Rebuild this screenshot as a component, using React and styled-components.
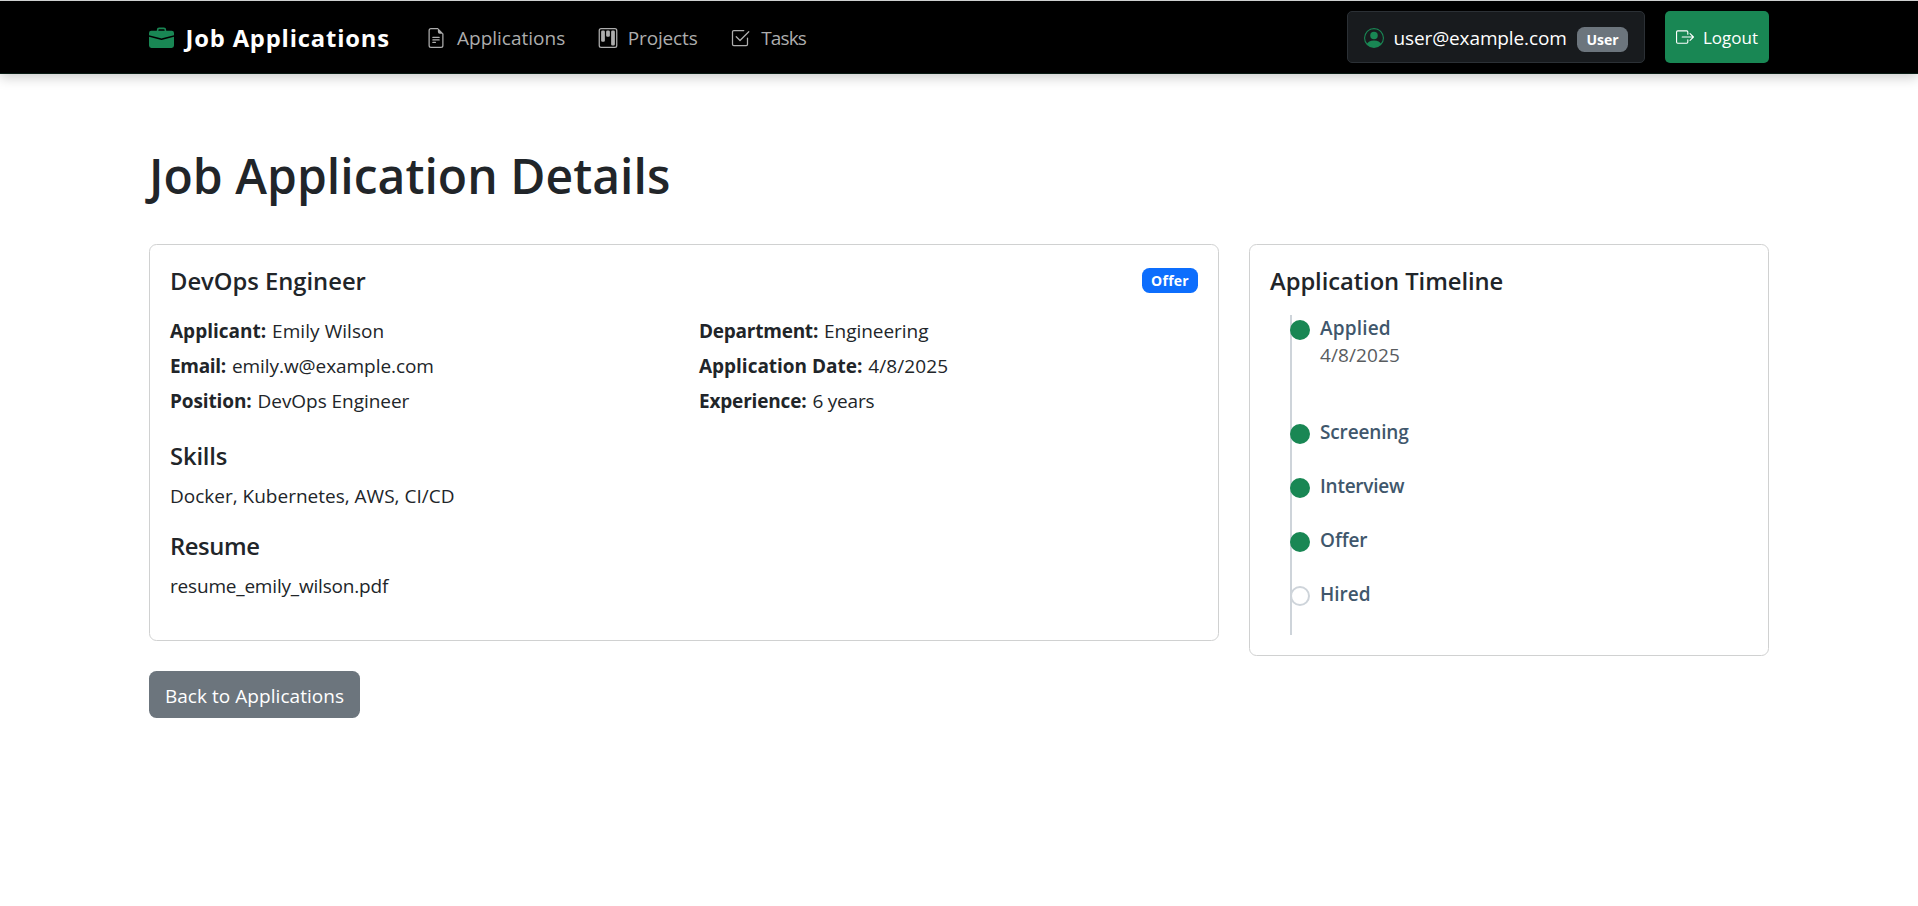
import React from "react";
import styled, { createGlobalStyle } from "styled-components";
import {
  BsBriefcaseFill,
  BsFileEarmarkText,
  BsKanban,
  BsCheck2Square,
  BsPersonCircle,
  BsBoxArrowRight,
} from "react-icons/bs";

const GlobalStyle = createGlobalStyle`
  *, *::before, *::after { box-sizing: border-box; }
  body {
    margin: 0;
    background: #fff;
    color: #212529;
    font-family: "Segoe UI", "Open Sans", "Noto Sans", sans-serif;
    font-size: 19px;
    line-height: 30px;
  }
  h1, h2, p, ul { margin: 0; padding: 0; }
  svg { display: block; flex: none; }
`;

const Text = styled.span`
  letter-spacing: ${(p) => p.$track || 0}px;
  white-space: nowrap;
`;

const Container = styled.div`
  width: 1620px;
  margin: 0 auto;
`;

/* Navigation bar */
const Navbar = styled.header`
  background: #000;
  border-top: 1px solid #ced0d0;
  border-bottom: 1px solid #0a1c15;
  box-shadow: 0 3px 12px rgba(0, 0, 0, 0.22);
`;

const NavInner = styled(Container)`
  display: flex;
  align-items: center;
  height: 72px;
`;

const Brand = styled.a`
  display: flex;
  align-items: center;
  gap: 11.5px;
  width: 276.5px;
  padding-top: 2px;
  color: #fff;
  font-size: 23.75px;
  font-weight: 700;
  svg { color: #198754; }
`;

const NavLinks = styled.nav`
  display: flex;
  gap: 32.5px;
  padding-top: 2px;
`;

const NavLink = styled.a`
  display: flex;
  align-items: center;
  gap: ${(p) => p.$gap}px;
  color: #adadad;
`;

const Account = styled.div`
  display: flex;
  gap: 20px;
  margin-left: auto;
`;

const UserPill = styled.div`
  display: flex;
  align-items: center;
  width: 298px;
  height: 52px;
  padding: 2px 16px 0;
  border: 1px solid #2b3035;
  border-radius: 5px;
  background: #181b1e;
  color: #fff;
  svg { color: #198754; margin-right: 9.5px; }
`;

const Badge = styled.span`
  width: ${(p) => p.$width}px;
  height: 25px;
  margin: 3px 0 0 auto;
  border-radius: 7.5px;
  background: ${(p) => (p.$tone === "primary" ? "#0d6efd" : "#6c757d")};
  color: #fff;
  font-size: 14px;
  font-weight: 700;
  line-height: 25px;
  text-align: center;
`;

const LogoutButton = styled.button`
  display: flex;
  align-items: center;
  gap: 9.5px;
  width: 104px;
  height: 52px;
  padding: 0 0 0 10.5px;
  border: 0;
  border-radius: 5px;
  background: #198754;
  color: #fff;
  font: inherit;
  font-size: 17px;
  ${Text} { padding-top: 1px; }
`;

/* Page content */
const Main = styled(Container)`
  padding-top: 72px;
`;

const PageTitle = styled.h1`
  height: 98px;
  font-size: 48px;
  font-weight: 600;
  line-height: 60px;
`;

const Columns = styled.div`
  display: grid;
  grid-template-columns: 1070px 520px;
  gap: 30px;
  align-items: start;
`;

const Stack = styled.div`
  display: flex;
  flex-direction: column;
  align-items: flex-start;
  gap: 30px;
`;

const Card = styled.section`
  width: 100%;
  padding: 20px;
  border: 1px solid #d0d1d1;
  border-radius: 7.5px;
  background: #fff;
`;

const CardHeader = styled.div`
  display: flex;
  align-items: flex-start;
  margin-bottom: ${(p) => p.$space}px;
`;

const Heading = styled.h2`
  font-size: 23.75px;
  font-weight: 600;
  line-height: 32px;
`;

const Fields = styled.div`
  display: grid;
  grid-template-columns: 1fr 1fr;
  gap: 5px 30px;
  margin-bottom: 24px;
`;

const Label = styled.strong`
  margin-right: ${(p) => p.$space || 1}px;
  letter-spacing: ${(p) => p.$track || 0}px;
  font-weight: 700;
`;

const Block = styled.div`
  margin-bottom: ${(p) => p.$space}px;
  ${Heading} { margin-bottom: 9px; }
`;

const BackButton = styled.button`
  width: 211px;
  height: 47px;
  padding: 2px 0 0;
  border: 0;
  border-radius: 7.5px;
  background: #6c757d;
  color: #fff;
  font: inherit;
`;

/* Timeline */
const Timeline = styled.ul`
  margin-left: 20px;
  border-left: 2px solid #ced4da;
  list-style: none;
`;

const Step = styled.li`
  display: flex;
  gap: 10px;
  height: ${(p) => (p.$tall ? 104 : 54)}px;
  margin-left: -2px;
`;

const Dot = styled.span`
  width: 20px;
  height: 20px;
  margin-top: 5px;
  border: 2px solid ${(p) => (p.$done ? "#198754" : "#ced4da")};
  border-radius: 50%;
  background: ${(p) => (p.$done ? "#198754" : "#fff")};
`;

const StepBody = styled.div`
  display: flex;
  flex-direction: column;
`;

const StepName = styled(Text)`
  color: #40576c;
  font-weight: 600;
  line-height: 26px;
`;

const StepDate = styled(Text)`
  color: #595c5f;
  line-height: 28px;
`;

const links = [
  { icon: BsFileEarmarkText, label: "Applications", gap: 11.5, track: 0 },
  { icon: BsKanban, label: "Projects", gap: 10, track: -0.14 },
  { icon: BsCheck2Square, label: "Tasks", gap: 11, track: -0.85 },
];

const fields = [
  { label: "Applicant:", lt: 0, value: "Emily Wilson", vt: 0.06 },
  { label: "Department:", lt: -0.24, value: "Engineering", vt: -0.03 },
  { label: "Email:", lt: -0.3, value: "emily.w@example.com", vt: -0.06 },
  { label: "Application Date:", lt: -0.02, value: "4/8/2025", vt: 0.1 },
  { label: "Position:", lt: -0.12, value: "DevOps Engineer", vt: -0.04 },
  { label: "Experience:", lt: -0.18, value: "6 years", vt: -0.2 },
];

const steps = [
  { name: "Applied", date: "4/8/2025", done: true, track: 0.17 },
  { name: "Screening", done: true, track: -0.15 },
  { name: "Interview", done: true, track: -0.24 },
  { name: "Offer", done: true, track: -0.07 },
  { name: "Hired", done: false, track: 0 },
];

export default function App() {
  return (
    <>
      <GlobalStyle />
      <Navbar>
        <NavInner>
          <Brand>
            <BsBriefcaseFill size={25} />
            <Text $track={0.84}>Job Applications</Text>
          </Brand>
          <NavLinks>
            {links.map(({ icon: Icon, label, gap, track }) => (
              <NavLink key={label} $gap={gap}>
                <Icon size={20} />
                <Text $track={track}>{label}</Text>
              </NavLink>
            ))}
          </NavLinks>
          <Account>
            <UserPill>
              <BsPersonCircle size={20} />
              <Text $track={-0.12}>user@example.com</Text>
              <Badge $width={51}>User</Badge>
            </UserPill>
            <LogoutButton>
              <BsBoxArrowRight size={18} />
              <Text>Logout</Text>
            </LogoutButton>
          </Account>
        </NavInner>
      </Navbar>

      <Main as="main">
        <PageTitle>
          <Text $track={0.04}>Job Application Details</Text>
        </PageTitle>
        <Columns>
          <Stack>
            <Card>
              <CardHeader $space={19}>
                <Heading>DevOps Engineer</Heading>
                <Badge $tone="primary" $width={56}>
                  <Text $track={0.25}>Offer</Text>
                </Badge>
              </CardHeader>
              <Fields>
                {fields.map((f) => (
                  <p key={f.label}>
                    <Label $track={f.lt}>{f.label}</Label>{" "}
                    <Text $track={f.vt}>{f.value}</Text>
                  </p>
                ))}
              </Fields>
              <Block $space={19}>
                <Heading>
                  <Text $track={-0.14}>Skills</Text>
                </Heading>
                <p>Docker, Kubernetes, AWS, CI/CD</p>
              </Block>
              <Block $space={19}>
                <Heading>
                  <Text $track={-0.4}>Resume</Text>
                </Heading>
                <p>
                  <Text $track={-0.19}>resume_emily_wilson.pdf</Text>
                </p>
              </Block>
            </Card>
            <BackButton>
              <Text $track={0.05}>Back to Applications</Text>
            </BackButton>
          </Stack>
          <Card>
            <CardHeader $space={18}>
              <Heading>
                <Text $track={-0.05}>Application Timeline</Text>
              </Heading>
            </CardHeader>
            <Timeline>
              {steps.map((s) => (
                <Step key={s.name} $tall={Boolean(s.date)}>
                  <Dot $done={s.done} />
                  <StepBody>
                    <StepName $track={s.track}>{s.name}</StepName>
                    {s.date && <StepDate $track={0.1}>{s.date}</StepDate>}
                  </StepBody>
                </Step>
              ))}
            </Timeline>
          </Card>
        </Columns>
      </Main>
    </>
  );
}
